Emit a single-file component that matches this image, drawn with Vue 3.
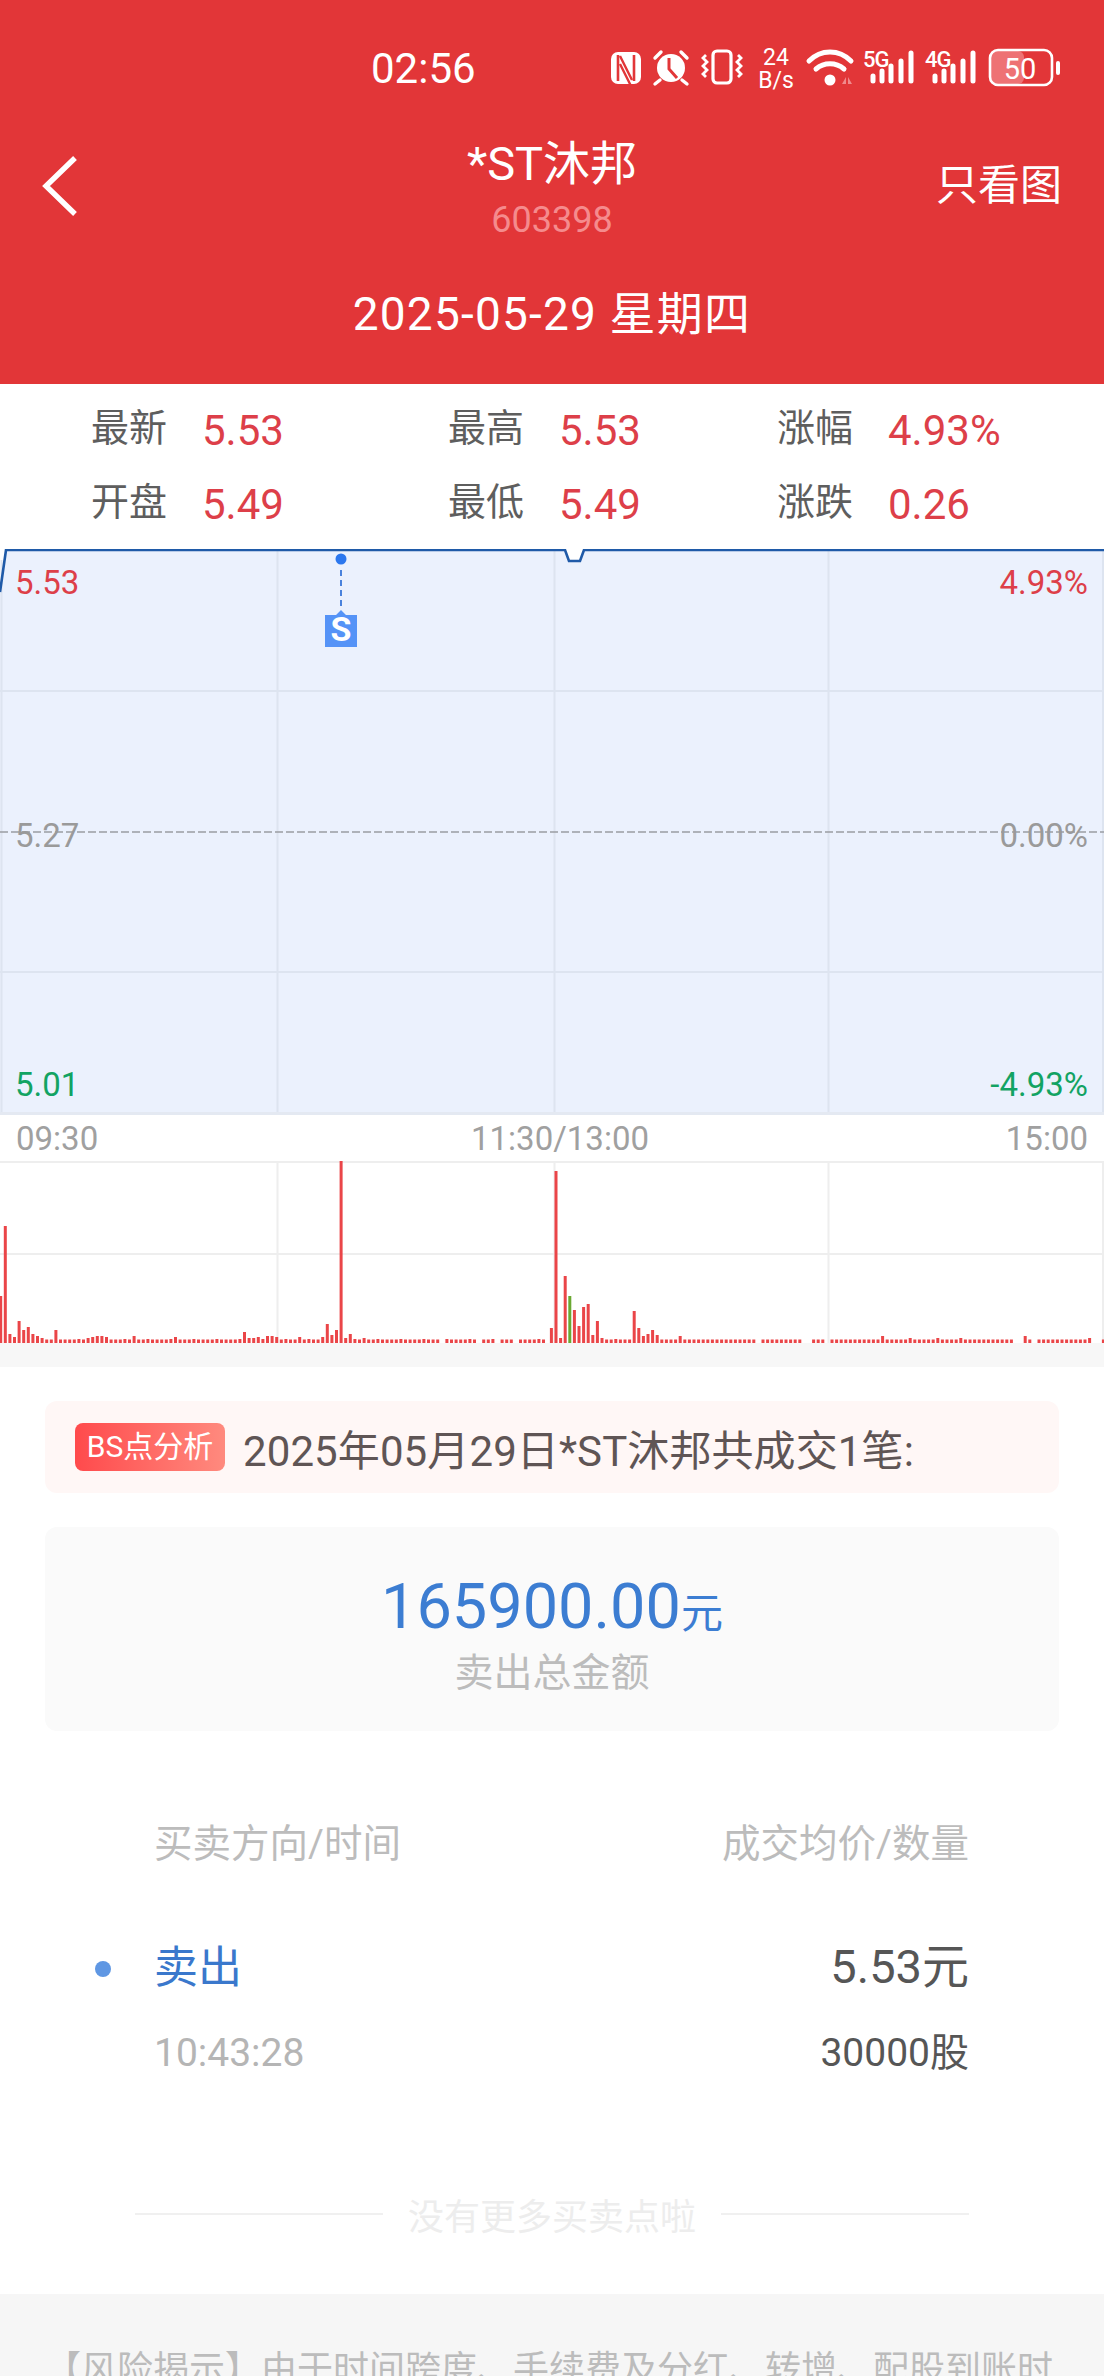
<script setup>
import { computed } from 'vue';

const stats = [
  { label: '最新', value: '5.53' },
  { label: '最高', value: '5.53' },
  { label: '涨幅', value: '4.93%' },
  { label: '开盘', value: '5.49' },
  { label: '最低', value: '5.49' },
  { label: '涨跌', value: '0.26' }
];

// volume heights read per minute, anything not listed is a 3-4px stub
const morning = { 0: 47, 1: 117, 2: 9, 3: 6, 4: 22, 5: 13, 6: 16, 7: 9, 8: 7, 9: 5, 12: 13, 19: 5, 20: 6, 21: 7, 22: 7, 23: 6, 29: 7, 38: 6, 53: 11, 54: 5, 55: 5, 56: 6, 58: 7, 59: 7, 60: 6, 65: 6, 70: 6, 71: 19, 72: 8, 73: 13, 74: 182, 75: 5, 76: 9, 79: 5 };
const afternoon = { '-1': 15, 0: 172, 1: 5, 2: 67, 3: 47, 4: 33, 5: 17, 6: 36, 7: 39, 8: 8, 9: 22, 10: 5, 13: 4, 17: 32, 18: 15, 19: 7, 20: 9, 21: 13, 22: 8, 27: 7, 71: 7, 77: 5, 83: 5, 88: 5, 102: 7, 116: 5 };
const skipMorning = [96, 104, 108, 112, 119];
const skipAfternoon = [44, 54, 55, 59, 100, 101, 104, 117, 118];

const bars = computed(() => {
  const list = [];
  for (let i = 0; i < 120; i++) {
    if (skipMorning.includes(i)) continue;
    list.push({ x: 0.7 + 4.6 * i, h: morning[i] || (i % 5 === 2 ? 4 : 3.5), color: '#ea4548' });
  }
  for (let k = -1; k < 120; k++) {
    if (skipAfternoon.includes(k)) continue;
    list.push({ x: 556 + 4.6 * k, h: afternoon[k] || 3.5, color: k === 3 ? '#6aa832' : '#ea4548' });
  }
  return list;
});
</script>

<template>
  <div class="page">
    <header class="header">
      <div class="status">
        <span class="clock">02:56</span>
        <svg class="status-icons" width="452" height="60" viewBox="610 40 452 60">
          <!-- nfc -->
          <rect x="611" y="52" width="30" height="32" rx="7" fill="#fff" />
          <path d="M618 55v26M634 55v26" stroke="#e23638" stroke-width="2.6" fill="none" />
          <path d="M620 56l12 24M620 64l12 24" stroke="#e23638" stroke-width="2.4" fill="none" />
          <!-- alarm -->
          <circle cx="671" cy="68" r="14" fill="#fff" />
          <path d="M669 58v11l8 9" stroke="#e23638" stroke-width="3" fill="none" />
          <path d="M655 58l6-6M687 58l-6-6M660 80l-5 4M682 80l5 4" stroke="#fff" stroke-width="3.4" stroke-linecap="round" />
          <!-- vibrate -->
          <rect x="713" y="51" width="18" height="32" rx="4" fill="none" stroke="#fff" stroke-width="3.2" />
          <path d="M706 55l-3 3 4 4-4 4 4 4-4 4 3 3M738 55l3 3-4 4 4 4-4 4 4 4-3 3" fill="none" stroke="#fff" stroke-width="2.8" />
          <!-- speed -->
          <text x="776" y="65" class="tiny" text-anchor="middle">24</text>
          <text x="776" y="88" class="tiny" text-anchor="middle">B/s</text>
          <!-- wifi -->
          <path d="M809 61c12-12 30-12 42 0" fill="none" stroke="#fff" stroke-width="5" stroke-linecap="round" />
          <path d="M816 69c8-7 20-7 28 0" fill="none" stroke="#fff" stroke-width="5" stroke-linecap="round" />
          <circle cx="830" cy="80" r="5.5" fill="#fff" />
          <path d="M842 84l4-7v7zM848 77l4 7h-4z" fill="#f08a8c" />
          <!-- 5g -->
          <text x="863" y="67" class="tiny narrow">5G</text>
          <g stroke="#fff" stroke-width="5" stroke-linecap="round">
            <path d="M873 81v-5M882 81v-10M891 81v-15M901 81v-20M911 81v-28" />
            <path d="M935 81v-5M944 81v-10M953 81v-15M963 81v-20M973 81v-28" />
          </g>
          <!-- 4g -->
          <text x="925" y="67" class="tiny narrow">4G</text>
          <!-- battery -->
          <rect x="991" y="51" width="33" height="33" rx="6" fill="#ee7274" />
          <rect x="990" y="50" width="62" height="35" rx="8" fill="none" stroke="#fff" stroke-width="2.6" />
          <rect x="1056" y="61" width="4" height="14" rx="2" fill="#fff" />
          <text x="1020" y="79" class="batt" text-anchor="middle">50</text>
        </svg>
      </div>
      <div class="nav">
        <div class="nav-left">
          <svg width="37" height="62" viewBox="0 0 37 62">
            <path d="M34 3L5 31l29 28" fill="none" stroke="#fff" stroke-width="5.4" />
          </svg>
        </div>
        <div class="nav-title">
          <div class="name">*ST沐邦</div>
          <div class="code">603398</div>
        </div>
        <div class="nav-right">只看图</div>
      </div>
      <div class="date">2025-05-29 星期四</div>
    </header>

    <section class="stats">
      <div v-for="item in stats" :key="item.label" class="stat">
        <span class="stat-label">{{ item.label }}</span>
        <span class="stat-value">{{ item.value }}</span>
      </div>
    </section>

    <section class="chart">
      <svg class="chart-svg" width="1104" height="566" viewBox="0 549 1104 566">
        <path d="M0 592L6 550H565L569 561H580L584 550H1104V1115H0Z" fill="#ebf1fd" />
        <path d="M1.5 560V1113M277.5 550V1113M554.5 550V1113M828.5 550V1113M1103 550V1113M0 691H1104M0 972H1104" stroke="#dde4f0" stroke-width="2" fill="none" />
        <path d="M0 1113.5H1104" stroke="#e4e9f2" stroke-width="3" />
        <path d="M0 832H1104" stroke="#9a9da2" stroke-width="1.6" stroke-dasharray="8 3" />
        <path d="M0 592L6 550H565L569 561H580L584 550H1104" fill="none" stroke="#1f5aa8" stroke-width="2.6" />
        <circle cx="341" cy="559" r="5.5" fill="#2b77ee" />
        <path d="M341 570V606" stroke="#4a82dc" stroke-width="2" stroke-dasharray="6 4" />
        <path d="M325 615H336L341 610L346 615H357V647H325Z" fill="#5593f7" />
        <text x="341" y="641" class="sign" text-anchor="middle">S</text>
      </svg>
      <span class="tag tl red">5.53</span>
      <span class="tag tr red">4.93%</span>
      <span class="tag ml gray">5.27</span>
      <span class="tag mr gray">0.00%</span>
      <span class="tag bl green">5.01</span>
      <span class="tag br green">-4.93%</span>
    </section>

    <div class="axis">
      <span>09:30</span>
      <span class="axis-mid">11:30/13:00</span>
      <span class="axis-end">15:00</span>
    </div>

    <svg class="volume" width="1104" height="182" viewBox="0 1161 1104 182">
      <path d="M0 1162H1104M0 1254H1104M277.5 1161V1343M554.5 1161V1343M828.5 1161V1343M1103 1161V1343" stroke="#eeeeee" stroke-width="2" fill="none" />
      <rect v-for="(bar, i) in bars" :key="i" :x="bar.x - 1.5" :y="1343 - bar.h" width="3" :height="bar.h" :fill="bar.color" />
    </svg>
    <div class="band"></div>

    <div class="summary">
      <span class="badge">BS点分析</span>
      <span class="summary-text">2025年05月29日*ST沐邦共成交1笔:</span>
    </div>

    <div class="total">
      <div class="total-amount">165900.00<small>元</small></div>
      <div class="total-label">卖出总金额</div>
    </div>

    <div class="table-head">
      <span>买卖方向/时间</span>
      <span>成交均价/数量</span>
    </div>

    <div class="trade">
      <span class="trade-dot"></span>
      <div class="trade-row">
        <span class="trade-side">卖出</span>
        <span class="trade-price">5.53元</span>
      </div>
      <div class="trade-row sub">
        <span class="trade-time">10:43:28</span>
        <span class="trade-qty">30000股</span>
      </div>
    </div>

    <div class="no-more">
      <i></i>
      <span>没有更多买卖点啦</span>
      <i></i>
    </div>

    <footer class="risk">【风险揭示】由于时间跨度、手续费及分红、转增、配股到账时</footer>
  </div>
</template>

<style>
html, body {
  margin: 0;
  background: #fff;
}
</style>

<style scoped>
.page {
  width: 1104px;
  height: 2376px;
  overflow: hidden;
  background: #fff;
  font-family: Roboto, "Noto Sans CJK SC", sans-serif;
}

.header {
  height: 384px;
  background: #e23638;
  color: #fff;
  box-sizing: border-box;
  padding-top: 40px;
}

.status {
  display: flex;
  justify-content: space-between;
  align-items: center;
  height: 60px;
  padding: 0 42px 0 371px;
}

.clock {
  font-size: 42px;
  line-height: 56px;
  margin-bottom: 2px;
}

.status-icons {
  display: block;
}

.tiny {
  font-size: 23px;
  fill: #fff;
}

.narrow {
  font-size: 22px;
  font-weight: 500;
  letter-spacing: -1px;
}

.batt {
  font-size: 29px;
  fill: #fff;
}

.nav {
  display: grid;
  grid-template-columns: 1fr auto 1fr;
  align-items: center;
  margin-top: 30px;
}

.nav-left {
  padding-left: 41px;
}

.nav-left svg {
  display: block;
}

.nav-title {
  text-align: center;
}

.name {
  font-size: 47px;
  line-height: 60px;
  margin-top: 4px;
  margin-bottom: 4px;
}

.code {
  font-size: 36px;
  line-height: 44px;
  color: #f58b8d;
}

.nav-right {
  text-align: right;
  font-size: 42px;
  line-height: 56px;
  padding-right: 42px;
}

.date {
  text-align: center;
  font-size: 46px;
  letter-spacing: 1.2px;
  line-height: 60px;
  margin-top: 42px;
}

.stats {
  display: grid;
  grid-template-columns: 357px 329px 1fr;
  height: 165px;
  box-sizing: border-box;
  padding: 9px 0 0 91px;
  grid-auto-rows: 74px;
}

.stat {
  display: flex;
  align-items: center;
}

.stat-label {
  width: 111px;
  font-size: 38px;
  line-height: 50px;
  margin-bottom: 5px;
  color: #5e5e5e;
}

.stat-value {
  font-size: 42px;
  color: #dd3f49;
}

.chart {
  position: relative;
  height: 566px;
}

.chart-svg {
  display: block;
}

.sign {
  font-size: 34px;
  font-weight: 700;
  fill: #fff;
}

.tag {
  position: absolute;
  font-size: 33px;
  line-height: 36px;
}

.tl { left: 15px; top: 16px; }
.tr { right: 16px; top: 16px; }
.ml { left: 15px; top: 269px; }
.mr { right: 16px; top: 269px; }
.bl { left: 15px; top: 518px; }
.br { right: 16px; top: 518px; }

.red { color: #dd3f49; }
.gray { color: #9a9a9a; }
.green { color: #12a363; }

.axis {
  display: grid;
  grid-template-columns: 1fr auto 1fr;
  align-items: center;
  height: 46px;
  padding: 0 16px;
  font-size: 33px;
  color: #a0a0a0;
}

.axis-mid {
  margin-left: 16px;
}

.axis-end {
  text-align: right;
}

.volume {
  display: block;
}

.band {
  height: 24px;
  background: #f7f7f7;
}

.summary {
  display: flex;
  align-items: center;
  height: 92px;
  margin: 34px 45px 0;
  padding-left: 30px;
  background: #fff7f6;
  border-radius: 12px;
}

.badge {
  width: 150px;
  height: 48px;
  line-height: 48px;
  text-align: center;
  font-size: 30px;
  color: #fff;
  border-radius: 8px;
  background: linear-gradient(90deg, #ff4a4c, #ff8a7e);
}

.summary-text {
  margin-left: 18px;
  font-size: 42px;
  letter-spacing: 0.1px;
  color: #5f5555;
}

.total {
  height: 204px;
  margin: 34px 45px 0;
  box-sizing: border-box;
  padding-top: 38px;
  text-align: center;
  background: #fafafa;
  border-radius: 12px;
}

.total-amount {
  font-size: 63px;
  line-height: 84px;
  color: #3c7dd2;
}

.total-amount small {
  font-size: 42px;
}

.total-label {
  font-size: 39px;
  line-height: 52px;
  margin-top: -9px;
  color: #bcbcbc;
}

.table-head {
  display: flex;
  justify-content: space-between;
  margin-top: 85px;
  padding: 0 135px 0 154px;
  font-size: 38.5px;
  line-height: 56px;
  color: #bcbcbc;
}

.trade {
  position: relative;
  margin-top: 61px;
  padding: 0 135px 0 154px;
}

.trade-dot {
  position: absolute;
  left: 95px;
  top: 28px;
  width: 16px;
  height: 16px;
  border-radius: 50%;
  background: #5f97e3;
}

.trade-row {
  display: flex;
  justify-content: space-between;
  align-items: baseline;
  height: 68px;
  line-height: 68px;
}

.trade-row.sub {
  height: 56px;
  line-height: 56px;
  margin-top: 24px;
}

.trade-side {
  font-size: 44px;
  color: #3a78cc;
}

.trade-price {
  font-size: 47px;
  color: #565656;
}

.trade-time {
  font-size: 39px;
  color: #b5b5b5;
}

.trade-qty {
  font-size: 39px;
  color: #565656;
}

.no-more {
  display: flex;
  align-items: center;
  justify-content: center;
  margin: 105px 135px 0;
  height: 56px;
  font-size: 36px;
  color: #ededed;
}

.no-more i {
  flex: 1;
  height: 2px;
  background: #f0f0f0;
}

.no-more span {
  margin: 0 25px;
}

.risk {
  margin-top: 52px;
  height: 200px;
  box-sizing: border-box;
  padding: 48px 45px 0;
  background: #f6f6f6;
  font-size: 36px;
  line-height: 56px;
  color: #bcbcbc;
  white-space: nowrap;
}
</style>
